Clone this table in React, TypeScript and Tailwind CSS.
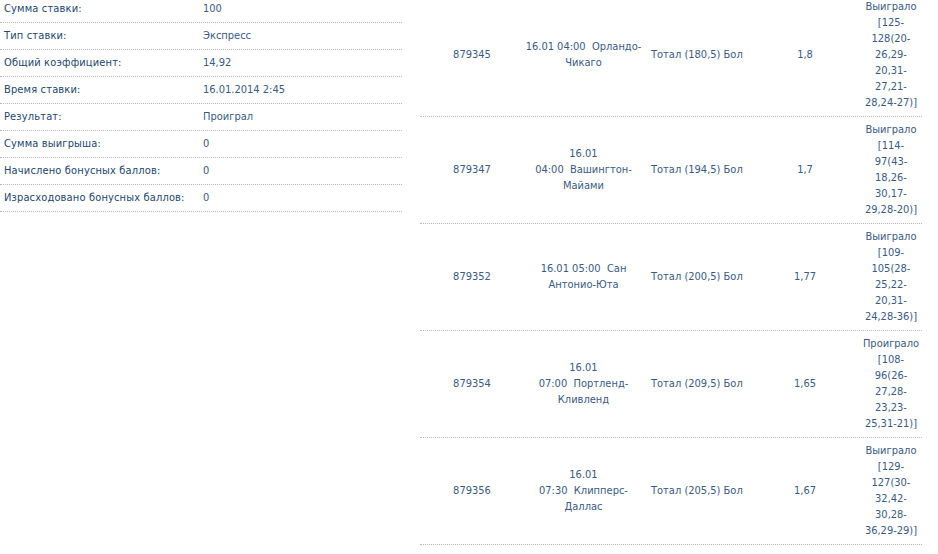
import React from "react";

const info: [string, string][] = [
  ["Сумма ставки:", "100"],
  ["Тип ставки:", "Экспресс"],
  ["Общий коэффициент:", "14,92"],
  ["Время ставки:", "16.01.2014 2:45"],
  ["Результат:", "Проиграл"],
  ["Сумма выигрыша:", "0"],
  ["Начислено бонусных баллов:", "0"],
  ["Израсходовано бонусных баллов:", "0"],
];

type Bet = {
  id: string;
  match: string[];
  market: string;
  odd: string;
  result: string[];
};

const bets: Bet[] = [
  {
    id: "879345",
    match: ["16.01 04:00\u00a0\u00a0Орландо-", "Чикаго"],
    market: "Тотал (180,5) Бол",
    odd: "1,8",
    result: ["Выиграло", "[125-", "128(20-", "26,29-", "20,31-", "27,21-", "28,24-27)]"],
  },
  {
    id: "879347",
    match: ["16.01", "04:00\u00a0\u00a0Вашингтон-", "Майами"],
    market: "Тотал (194,5) Бол",
    odd: "1,7",
    result: ["Выиграло", "[114-", "97(43-", "18,26-", "30,17-", "29,28-20)]"],
  },
  {
    id: "879352",
    match: ["16.01 05:00\u00a0\u00a0Сан", "Антонио-Юта"],
    market: "Тотал (200,5) Бол",
    odd: "1,77",
    result: ["Выиграло", "[109-", "105(28-", "25,22-", "20,31-", "24,28-36)]"],
  },
  {
    id: "879354",
    match: ["16.01", "07:00\u00a0\u00a0Портленд-", "Кливленд"],
    market: "Тотал (209,5) Бол",
    odd: "1,65",
    result: ["Проиграло", "[108-", "96(26-", "27,28-", "23,23-", "25,31-21)]"],
  },
  {
    id: "879356",
    match: ["16.01", "07:30\u00a0\u00a0Клипперс-", "Даллас"],
    market: "Тотал (205,5) Бол",
    odd: "1,67",
    result: ["Выиграло", "[129-", "127(30-", "32,42-", "30,28-", "36,29-29)]"],
  },
];

const Lines = ({ lines }: { lines: string[] }) => (
  <>
    {lines.map((l, i) => (
      <div key={i} className="whitespace-pre">
        {l}
      </div>
    ))}
  </>
);

export default function App() {
  return (
    <div
      className="w-[938px] h-[554px] overflow-hidden bg-white text-[11px] text-[#3a5a82]"
      style={{ fontFamily: "Tahoma, 'DejaVu Sans Condensed', 'Liberation Sans', sans-serif" }}
    >
      <div className="flex items-start -mt-[6px]">
        <div className="w-[402px] shrink-0 mt-[2px]">
          {info.map(([k, v]) => (
            <div
              key={k}
              className="flex items-center h-[27px] border-b border-dotted border-[#b8b8b8]"
            >
              <div className="w-[199px] pl-[4px] text-[#23466e] tracking-[0.15px]">{k}</div>
              <div className="pl-[4px]">{v}</div>
            </div>
          ))}
        </div>
        <div className="ml-[18px] w-[502px] shrink-0">
          {bets.map((b) => (
            <div
              key={b.id}
              className="flex items-center py-[5px] border-b border-dotted border-[#b8b8b8] leading-[16px]"
            >
              <div className="w-[104px] text-center">{b.id}</div>
              <div className="w-[119px] text-center">
                <Lines lines={b.match} />
              </div>
              <div className="w-[112px] pl-[8px]">{b.market}</div>
              <div className="w-[100px] text-center">{b.odd}</div>
              <div className="w-[67px] pl-[5px] text-center">
                <Lines lines={b.result} />
              </div>
            </div>
          ))}
        </div>
      </div>
    </div>
  );
}
